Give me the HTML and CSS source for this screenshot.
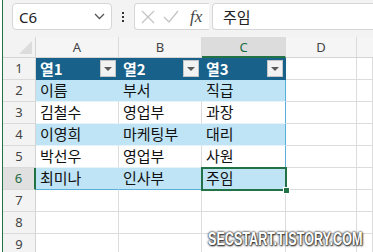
FILE: index.html
```html
<!DOCTYPE html>
<html>
<head>
	<title>Sheet</title>
	<link rel="stylesheet" href="styles.css">
</head>
<body>
	<div class="app">
		<div class="topbar">
			<div class="namebox">
				<span>C6</span>
				<svg class="chev" width="11" height="7" viewBox="0 0 11 7"><path d="M1 1l4.5 4.5L10 1" fill="none" stroke="#555" stroke-width="1.3"/></svg>
			</div>
			<div class="dots"><i></i><i></i><i></i></div>
			<div class="fxbox">
				<svg width="14" height="14" viewBox="0 0 14 14"><path d="M1 1l12 12M13 1L1 13" stroke="#c4c4c4" stroke-width="1.3"/></svg>
				<svg width="16" height="14" viewBox="0 0 16 14"><path d="M1 7l5 5L15 1" fill="none" stroke="#c4c4c4" stroke-width="1.3"/></svg>
				<span class="fx">fx</span>
			</div>
			<div class="formula">주임</div>
		</div>

		<div class="sheet">
			<div class="corner"><b></b></div>
			<div class="colh">A</div>
			<div class="colh">B</div>
			<div class="colh sel">C</div>
			<div class="colh">D</div>
			<div class="colh last"></div>

			<div class="rowh">1</div>
			<div class="cell th">열1<span class="drop"></span></div>
			<div class="cell th">열2<span class="drop"></span></div>
			<div class="cell th edge">열3<span class="drop"></span></div>
			<div class="cell"></div>
			<div class="cell"></div>

			<div class="rowh">2</div>
			<div class="cell band">이름</div>
			<div class="cell band">부서</div>
			<div class="cell band edge">직급</div>
			<div class="cell"></div>
			<div class="cell"></div>

			<div class="rowh">3</div>
			<div class="cell td">김철수</div>
			<div class="cell td">영업부</div>
			<div class="cell td edge">과장</div>
			<div class="cell"></div>
			<div class="cell"></div>

			<div class="rowh">4</div>
			<div class="cell band">이영희</div>
			<div class="cell band">마케팅부</div>
			<div class="cell band edge">대리</div>
			<div class="cell"></div>
			<div class="cell"></div>

			<div class="rowh">5</div>
			<div class="cell td">박선우</div>
			<div class="cell td">영업부</div>
			<div class="cell td edge">사원</div>
			<div class="cell"></div>
			<div class="cell"></div>

			<div class="rowh sel">6</div>
			<div class="cell band bottom">최미나</div>
			<div class="cell band bottom">인사부</div>
			<div class="cell band bottom edge active">주임<span class="handle"></span></div>
			<div class="cell"></div>
			<div class="cell"></div>

			<div class="rowh">7</div>
			<div class="cell"></div><div class="cell"></div><div class="cell"></div><div class="cell"></div><div class="cell"></div>
			<div class="rowh">8</div>
			<div class="cell"></div><div class="cell"></div><div class="cell"></div><div class="cell"></div><div class="cell"></div>
			<div class="rowh">9</div>
			<div class="cell"></div><div class="cell"></div><div class="cell"></div><div class="cell"></div><div class="cell"></div>
		</div>
	</div>
	<div class="mark">SECSTART.TISTORY.COM</div>
</body>
</html>
```

FILE: styles.css
```css
*{margin: 0;
	padding: 0;
	box-sizing: border-box;
}
body{
	width: 373px;
	height: 252px;
	overflow: hidden;
	background: #fff;
	padding-left: 2px;
	font-family: "Noto Sans", sans-serif;
	position: relative;
}
.app{
	border-left: 1px solid #217346;
	height: 252px;
	background: #f3f3f3;
}
.topbar{
	height: 37px;
	display: flex;
	align-items: flex-start;
	padding-top: 3px;
	padding-left: 9px;
}
.namebox{
	width: 100px;
	height: 27px;
	background: #fff;
	border: 1px solid #d6d6d6;
	border-radius: 4px;
	display: flex;
	align-items: center;
	justify-content: space-between;
	padding: 0 6px 0 6px;
	font-size: 15px;
	color: #222;
}
.dots{
	width: 22px;
	height: 27px;
	display: flex;
	flex-direction: column;
	align-items: center;
	justify-content: center;
	gap: 2px;
}
.dots i{
	width: 2px;
	height: 2px;
	background: #333;
}
.fxbox{
	width: 75px;
	height: 27px;
	background: #fff;
	border: 1px solid #d6d6d6;
	border-right: none;
	border-radius: 4px 0 0 4px;
	display: flex;
	align-items: center;
	padding-left: 6px;
	gap: 8px;
}
.fx{
	font-family: "Liberation Serif", serif;
	font-style: italic;
	font-size: 17px;
	color: #444;
	margin-left: 3px;
}
.formula{
	flex: 1;
	height: 27px;
	background: #fff;
	border: 1px solid #d6d6d6;
	border-right: none;
	border-radius: 4px 0 0 4px;
	margin-left: 3px;
	padding-left: 10px;
	font-family: "Noto Sans CJK KR", sans-serif;
	font-size: 15px;
	line-height: 25px;
	color: #222;
}

.sheet{
	display: grid;
	grid-template-columns: 33px 83px 83px 84px 71px 1fr;
	grid-template-rows: 21px repeat(9, 22px);
	background: #fff;
}
.corner{
	background: #f3f3f3;
	border-right: 1px solid #d4d4d4;
	border-bottom: 1px solid #d4d4d4;
	position: relative;
}
.corner b{
	position: absolute;
	right: 3px;
	bottom: 3px;
	width: 0;
	height: 0;
	border-left: 13px solid transparent;
	border-bottom: 13px solid #dcdcdc;
}
.colh{
	background: #f5f5f5;
	border-right: 1px solid #dadada;
	border-bottom: 1px solid #d4d4d4;
	text-align: center;
	font-size: 13px;
	line-height: 20px;
	color: #444;
}
.colh.sel{
	background: #dcdcdc;
	border-bottom: 2px solid #217346;
	color: #1d6b44;
}
.colh.last{
	border-right: none;
}
.rowh{
	background: #f3f3f3;
	border-right: 1px solid #d4d4d4;
	border-bottom: 1px solid #dadada;
	text-align: center;
	font-size: 13px;
	line-height: 21px;
	color: #444;
}
.rowh.sel{
	background: #e0e0e0;
	border-right: 2px solid #217346;
	color: #1d6b44;
}
.cell{
	border-right: 1px solid #dcdcdc;
	border-bottom: 1px solid #dcdcdc;
	padding-left: 4px;
	font-family: "Noto Sans CJK KR", sans-serif;
	font-size: 15px;
	line-height: 20px;
	color: #111;
	position: relative;
}
.th{
	background: #17618a;
	border-right-color: #17618a;
	border-bottom-color: #17618a;
	color: #fff;
	font-weight: bold;
	display: flex;
	justify-content: space-between;
	align-items: center;
	padding-right: 2px;
}
.band{
	background: #bfe4f5;
	border-right-color: #bfe4f5;
	border-bottom-color: #e6f3fa;
}
.td{
	border-bottom-color: #e6f3fa;
}
.edge{
	border-right: 1px solid #5aaedb;
}
.th.edge{
	border-right-color: #17618a;
}
.bottom{
	border-bottom-color: #5aaedb;
}
.drop{
	width: 16px;
	height: 17px;
	background: #f2f2f2;
	border: 1px solid #c6c6c6;
	position: relative;
}
.drop::after{
	content: "";
	position: absolute;
	left: 3px;
	top: 6px;
	border-left: 4px solid transparent;
	border-right: 4px solid transparent;
	border-top: 4px solid #5a5a5a;
}
.active{
	outline: 2px solid #217346;
	outline-offset: -1px;
	z-index: 2;
}
.handle{
	position: absolute;
	right: -5px;
	bottom: -5px;
	width: 7px;
	height: 7px;
	background: #217346;
	border: 1px solid #fff;
}
.mark{
	position: absolute;
	left: 208px;
	top: 229px;
	font-family: "Liberation Sans", sans-serif;
	font-weight: bold;
	font-size: 18px;
	color: #fff;
	text-shadow: 0 0 3px #333, 0 0 2px #333, 1px 1px 2px #222;
	transform: scaleX(0.7);
	transform-origin: left top;
	white-space: nowrap;
}
```
